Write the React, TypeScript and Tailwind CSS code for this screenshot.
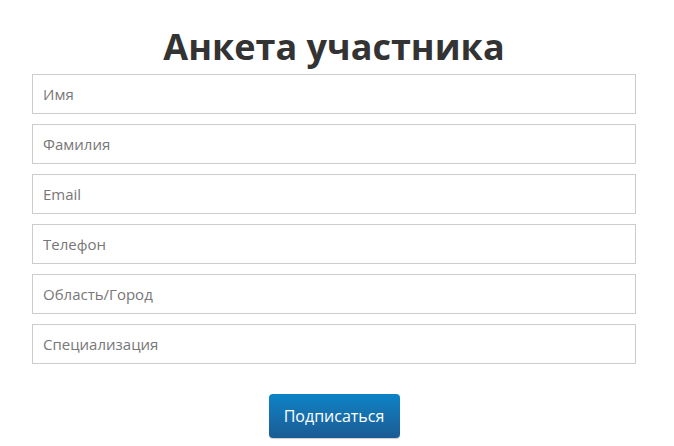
export default function App() {
  const fields = ["Имя", "Фамилия", "Email", "Телефон", "Область/Город", "Специализация"]

  return (
    <div className="min-h-[446px] bg-white font-['Open_Sans',sans-serif]">
      <div className="w-[604px] ml-[32px] pt-[20px]">
        <h1 className="text-center text-[36px] leading-[54px] font-bold text-[#333333]">
          Анкета участника
        </h1>
        <form className="flex flex-col gap-[10px]">
          {fields.map((field) => (
            <input
              key={field}
              type="text"
              placeholder={field}
              className="h-[40px] w-full border border-[#cccccc] bg-white px-[10px] text-[15px] text-[#555555] placeholder:text-[#777777] outline-none"
            />
          ))}
          <div className="flex justify-center pt-[20px]">
            <button
              type="button"
              className="h-[44px] w-[131px] rounded-[4px] bg-gradient-to-b from-[#0a84c6] to-[#1a5b94] text-[16px] text-white shadow-[0_1px_1px_rgba(0,0,0,0.2)]"
            >
              Подписаться
            </button>
          </div>
        </form>
      </div>
    </div>
  )
}
